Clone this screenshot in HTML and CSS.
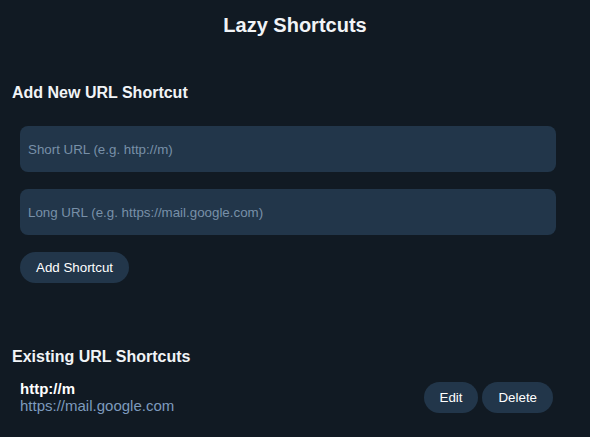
FILE: index.html
```html
<!DOCTYPE html>
<html lang="en">
<head>
<meta charset="utf-8">
<title>Lazy Shortcuts</title>
<link rel="stylesheet" href="styles.css">
</head>
<body>
<div class="app">
  <h1 class="title">Lazy Shortcuts</h1>

  <section class="section add">
    <h2 class="section-title">Add New URL Shortcut</h2>
    <div class="form">
      <input class="field" type="text" placeholder="Short URL (e.g. http://m)">
      <input class="field" type="text" placeholder="Long URL (e.g. https://mail.google.com)">
      <div class="actions">
        <button class="btn" type="button">Add Shortcut</button>
      </div>
    </div>
  </section>

  <section class="section existing">
    <h2 class="section-title">Existing URL Shortcuts</h2>
    <ul class="list">
      <li class="item">
        <div class="item-text">
          <span class="item-short">http://m</span>
          <span class="item-long">https://mail.google.com</span>
        </div>
        <div class="item-actions">
          <button class="btn" type="button">Edit</button>
          <button class="btn" type="button">Delete</button>
        </div>
      </li>
    </ul>
  </section>
</div>
</body>
</html>
```

FILE: styles.css
```css
* {
  box-sizing: border-box;
}

html, body {
  margin: 0;
  background: #111a23;
}

body {
  font-family: "Liberation Sans", Arial, Helvetica, sans-serif;
  color: #f1f4f7;
  width: 590px;
  height: 437px;
  overflow: hidden;
}

.app {
  padding: 14px 12px 0;
}

.title {
  margin: 0;
  font-size: 20px;
  line-height: 23px;
  font-weight: bold;
  text-align: center;
}

.section-title {
  margin: 0;
  font-size: 16px;
  line-height: 18px;
  font-weight: bold;
}

.add {
  margin-top: 47px;
}

.form {
  display: flex;
  flex-direction: column;
  gap: 17px;
  padding: 24px 22px 0 8px;
}

.field {
  display: block;
  width: 100%;
  height: 46px;
  margin: 0;
  padding: 0 8px;
  border: none;
  border-radius: 8px;
  background: #22364a;
  color: #f1f4f7;
  font-family: "Liberation Sans", Arial, Helvetica, sans-serif;
  font-size: 13.333px;
  outline: none;
}

.field::placeholder {
  color: #7890a8;
  opacity: 1;
}

.actions {
  display: flex;
}

.btn {
  margin: 0;
  padding: 8px 16px;
  border: none;
  border-radius: 16px;
  background: #22364a;
  color: #ffffff;
  font-family: "Liberation Sans", Arial, Helvetica, sans-serif;
  font-size: 13.333px;
  line-height: 15px;
  cursor: pointer;
}

.existing {
  margin-top: 65px;
}

.list {
  list-style: none;
  margin: 0;
  padding: 14px 25px 0 8px;
}

.item {
  display: flex;
  align-items: center;
  justify-content: space-between;
}

.item-text {
  display: flex;
  flex-direction: column;
}

.item-short {
  font-size: 15px;
  line-height: 17px;
  font-weight: bold;
  color: #ffffff;
}

.item-long {
  font-size: 15px;
  line-height: 17px;
  color: #7d9bbd;
}

.item-actions {
  display: flex;
  gap: 4px;
}
```
